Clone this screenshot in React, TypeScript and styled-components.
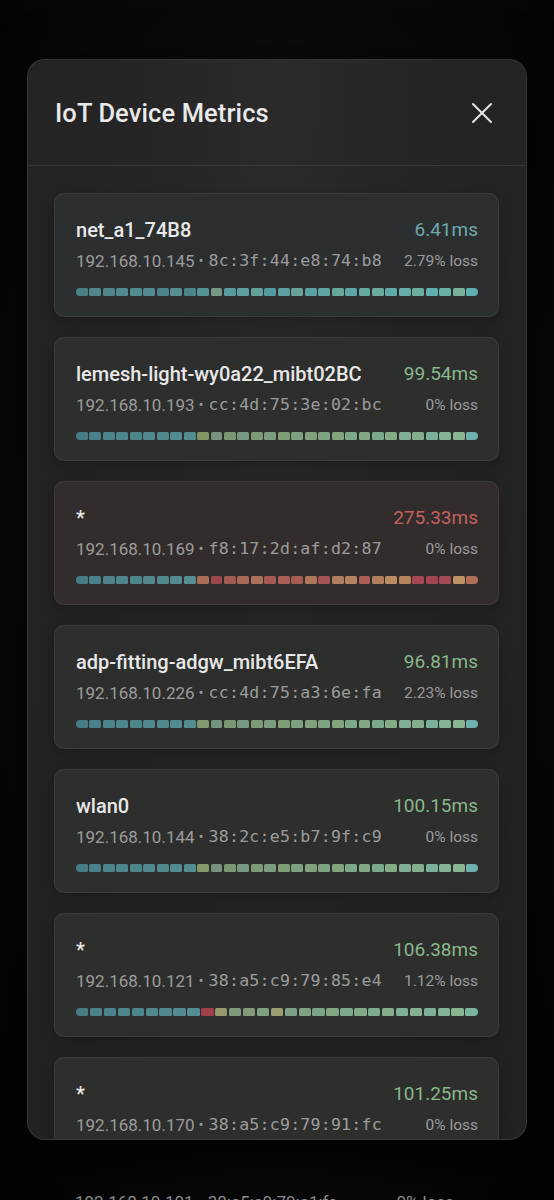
import React from 'react';
import styled, { createGlobalStyle } from 'styled-components';

// #region data
type Device = {
    name: string;
    ip: string;
    mac: string;
    latency: string;
    loss: string;
    tone: 'teal' | 'green' | 'red';
    bars: string[];
};

const TEAL = ['#4b8891', '#4f8d95', '#52909a', '#54929a', '#52929b', '#56949c', '#55959c', '#58989f', '#5a9ca2'];

const GREEN_TAIL = [
    '#7fa28a', '#86a77e', '#80a98c', '#89ab80', '#84ad8a', '#8aae82', '#86b08e', '#8cb287', '#88b491', '#8eb58a',
    '#86b897', '#8eba90', '#88bc9c', '#90bd95', '#8ac0a2', '#92c29a', '#86c4aa', '#8ec6a4', '#96c89e', '#78c3c0',
];

const devices: Device[] = [
    {
        name: 'net_a1_74B8',
        ip: '192.168.10.145',
        mac: '8c:3f:44:e8:74:b8',
        latency: '6.41ms',
        loss: '2.79% loss',
        tone: 'teal',
        bars: [
            '#4d8b93', '#55939a', '#56949a', '#57979c', '#599a9e', '#589a9f', '#4f8f96', '#5c9ca0', '#4f9298', '#5ba0a3',
            '#7fa78e', '#5ea8ad', '#64aeb0', '#6cb0a8', '#5aa8ae', '#64afb1', '#70b4a8', '#62b3b5', '#69b6b1', '#6fb9ad',
            '#64b8b9', '#6bb9b3', '#74bcad', '#66bcbc', '#6ebdb7', '#74c0b0', '#68c0c1', '#72c2b7', '#84c5aa', '#64c1c7',
        ],
    },
    {
        name: 'lemesh-light-wy0a22_mibt02BC',
        ip: '192.168.10.193',
        mac: 'cc:4d:75:3e:02:bc',
        latency: '99.54ms',
        loss: '0% loss',
        tone: 'green',
        bars: [...TEAL, '#8ca56f', ...GREEN_TAIL],
    },
    {
        name: '*',
        ip: '192.168.10.169',
        mac: 'f8:17:2d:af:d2:87',
        latency: '275.33ms',
        loss: '0% loss',
        tone: 'red',
        bars: [
            ...TEAL,
            '#b8785c', '#a84c4f', '#b0625a', '#b9735e', '#bd7b60', '#b4605a', '#b9675c', '#b66258', '#c07f5f', '#b45a5c',
            '#c08a66', '#c5906a', '#b9675c', '#c58a65', '#cc9a6c', '#c99066', '#b64d58', '#b24a58', '#b44f5a', '#d4a06c',
            '#c47a5e',
        ],
    },
    {
        name: 'adp-fitting-adgw_mibt6EFA',
        ip: '192.168.10.226',
        mac: 'cc:4d:75:a3:6e:fa',
        latency: '96.81ms',
        loss: '2.23% loss',
        tone: 'green',
        bars: [...TEAL, '#8aa878', ...GREEN_TAIL],
    },
    {
        name: 'wlan0',
        ip: '192.168.10.144',
        mac: '38:2c:e5:b7:9f:c9',
        latency: '100.15ms',
        loss: '0% loss',
        tone: 'green',
        bars: [...TEAL, '#8fa872', ...GREEN_TAIL],
    },
    {
        name: '*',
        ip: '192.168.10.121',
        mac: '38:a5:c9:79:85:e4',
        latency: '106.38ms',
        loss: '1.12% loss',
        tone: 'green',
        bars: [
            ...TEAL,
            '#b0444f', '#a4a876', '#8aa886', '#90aa84', '#8cae8c', '#a8ac78', '#88b090', '#8cb38c', '#8ab594', '#90b78e',
            '#88b99a', '#8ebb94', '#88bd9e', '#90bf98', '#8ac1a4', '#92c39c', '#88c4aa', '#8ec6a4', '#96c89e', '#86c8b0',
        ],
    },
    {
        name: '*',
        ip: '192.168.10.170',
        mac: '38:a5:c9:79:91:fc',
        latency: '101.25ms',
        loss: '0% loss',
        tone: 'green',
        bars: [...TEAL, '#8ca56f', ...GREEN_TAIL],
    },
];

const toneColor = {
    teal: '#6ea9ad',
    green: '#8ab78c',
    red: '#c2625c',
};

const toneTint = {
    teal: 'rgba(90, 160, 170, 0.04)',
    green: 'rgba(120, 170, 120, 0.03)',
    red: 'rgba(190, 80, 70, 0.05)',
};
// #endregion data

// #region styles
const GlobalStyle = createGlobalStyle`
    html, body {
        margin: 0;
        padding: 0;
        background: radial-gradient(ellipse at 50% 45%, #141414 0%, #090909 60%, #030303 100%);
        min-height: 1200px;
        overflow: hidden;
        font-family: Roboto, 'Noto Sans', sans-serif;
    }
`;

const Page = styled.div`
    width: 554px;
    height: 1200px;
    overflow: hidden;
    padding-top: 59px;
    box-sizing: border-box;
`;

const Modal = styled.div`
    margin: 0 27px;
    height: 1081px;
    box-sizing: border-box;
    border-radius: 18px;
    border: 1px solid rgba(255, 255, 255, 0.09);
    background: radial-gradient(ellipse at 50% 0%, #2b2b2b 0%, #252525 40%, #222222 100%);
    box-shadow: 0 20px 60px rgba(0, 0, 0, 0.8);
    overflow: hidden;
    display: flex;
    flex-direction: column;
`;

const Header = styled.div`
    height: 106px;
    flex-shrink: 0;
    box-sizing: border-box;
    padding: 0 33px 0 27px;
    display: flex;
    align-items: center;
    justify-content: space-between;
    border-bottom: 1px solid rgba(255, 255, 255, 0.08);
`;

const Title = styled.h2`
    margin: 0;
    font-size: 25.5px;
    font-weight: 500;
    color: #e9e9e9;
    letter-spacing: 0.1px;
`;

const CloseButton = styled.button`
    background: none;
    border: none;
    padding: 0;
    width: 22px;
    height: 22px;
    display: flex;
    align-items: center;
    justify-content: center;
    cursor: pointer;
    color: #e6e6e6;
`;

const List = styled.div`
    padding: 27px 27px 27px 26px;
    display: flex;
    flex-direction: column;
    gap: 20px;
`;

const Card = styled.div<{ $tint: string }>`
    border-radius: 10px;
    border: 1px solid rgba(255, 255, 255, 0.07);
    background: linear-gradient(${(p) => p.$tint}, ${(p) => p.$tint}), #2a2a2a;
    padding: 22px 20px 20px 21px;
    box-shadow: 0 4px 14px rgba(0, 0, 0, 0.25);
`;

const Row = styled.div`
    display: flex;
    align-items: center;
    justify-content: space-between;
    gap: 12px;
`;

const Name = styled.div`
    font-size: 20px;
    font-weight: 500;
    color: #e8e8e8;
    line-height: 28px;
    white-space: nowrap;
`;

const Latency = styled.div<{ $color: string }>`
    font-size: 19px;
    color: ${(p) => p.$color};
    line-height: 28px;
    white-space: nowrap;
`;

const SubRow = styled(Row)`
    margin-top: 5px;
    line-height: 24px;
`;

const Address = styled.div`
    display: flex;
    align-items: center;
    color: #9c9c9c;
    font-size: 17px;
    white-space: nowrap;
`;

const Dot = styled.span`
    margin: 0 5px 0 4px;
    font-size: 15px;
`;

const Mac = styled.span`
    font-family: 'DejaVu Sans Mono', 'Liberation Mono', monospace;
    font-size: 16.6px;
    letter-spacing: 0.2px;
`;

const Loss = styled.div`
    color: #9a9a9a;
    font-size: 15.5px;
    white-space: nowrap;
`;

const Bar = styled.div`
    margin-top: 15px;
    display: flex;
    gap: 1.5px;
    height: 8px;
`;

const Segment = styled.div`
    flex: 1;
    border-radius: 1.5px;
    opacity: 0.88;

    &:first-child {
        border-radius: 4px 1.5px 1.5px 4px;
    }

    &:last-child {
        border-radius: 1.5px 4px 4px 1.5px;
    }
`;

const Ghost = styled.div`
    margin: 52px 100px 0 75px;
    display: flex;
    justify-content: space-between;
    color: #8a8a8a;
    font-size: 17px;
    line-height: 20px;
`;
// #endregion styles

// #region module
const CloseIcon = () => (
    <svg width="22" height="22" viewBox="0 0 22 22" fill="none" stroke="currentColor" strokeWidth="2" strokeLinecap="round">
        <line x1="2" y1="2" x2="20" y2="20" />
        <line x1="20" y1="2" x2="2" y2="20" />
    </svg>
);

const DeviceCard = ({ device }: { device: Device }) => (
    <Card $tint={toneTint[device.tone]}>
        <Row>
            <Name>{device.name}</Name>
            <Latency $color={toneColor[device.tone]}>{device.latency}</Latency>
        </Row>
        <SubRow>
            <Address>
                {device.ip}
                <Dot>•</Dot>
                <Mac>{device.mac}</Mac>
            </Address>
            <Loss>{device.loss}</Loss>
        </SubRow>
        <Bar>
            {device.bars.map((color, i) => (
                <Segment key={i} style={{ background: color }} />
            ))}
        </Bar>
    </Card>
);

export default function App() {
    return (
        <>
            <GlobalStyle />
            <Page>
                <Modal>
                    <Header>
                        <Title>IoT Device Metrics</Title>
                        <CloseButton aria-label="Close">
                            <CloseIcon />
                        </CloseButton>
                    </Header>
                    <List>
                        {devices.map((d, i) => (
                            <DeviceCard key={i} device={d} />
                        ))}
                    </List>
                </Modal>
                <Ghost>
                    <span>192.168.10.101 • 38:a5:c9:79:a1:fc</span>
                    <span>0% loss</span>
                </Ghost>
            </Page>
        </>
    );
}
// #endregion module
